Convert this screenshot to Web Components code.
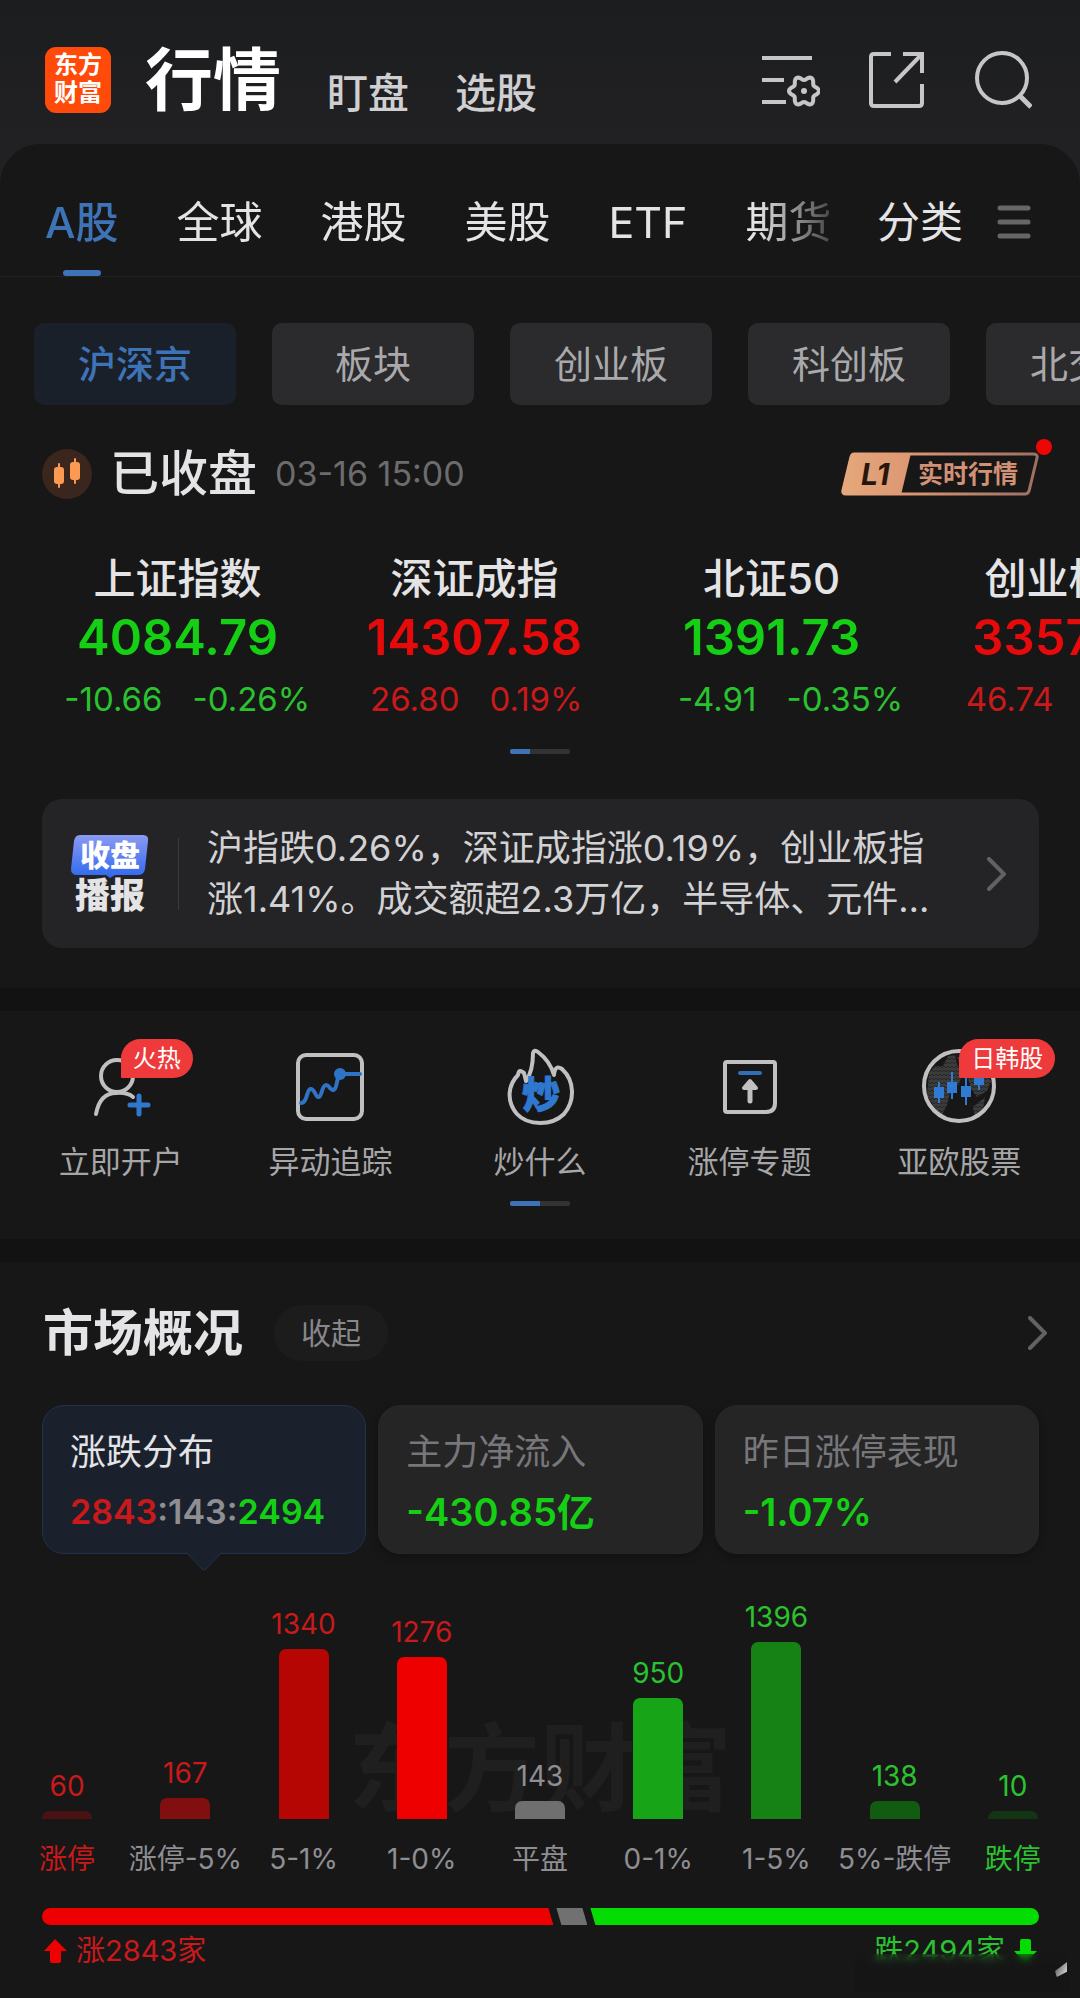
<!DOCTYPE html>
<html lang="zh-CN">
<head>
<meta charset="utf-8">
<meta name="viewport" content="width=device-width, initial-scale=1">
<title>行情</title>
<style>
	:root {
		--bg: #171717;
		--divider: #121212;
		--text: #e4e4e6;
		--muted: #8e8e93;
		--blue: #3e73b8;
		--icon: #c0c0c2;
		--up: #e60a0a;
		--up-soft: #c9191b;
		--down: #14cf14;
		--down-soft: #2bc22f;
	}
	body {
		margin: 0;
		min-height: 100vh;
		display: flex;
		flex-direction: column;
		overflow-x: hidden;
		background: linear-gradient(#1c1d1f, #212124 144px);
		color: var(--text);
		font-family: Inter, "Noto Sans CJK SC", sans-serif;
	}
	main {
		flex: 1;
		background: var(--bg);
		border-radius: 40px 40px 0 0;
	}
	section {
		border-bottom: 23px solid var(--divider);
	}
	section:last-child {
		border-bottom: 0;
	}
</style>
</head>
<body>
<em-header></em-header>
<main>
	<section>
		<em-tabs></em-tabs>
		<em-chips></em-chips>
		<em-status time="03-16 15:00">已收盘</em-status>
		<em-index-list>
			<em-index trend="down" value="4084.79" change="-10.66" percent="-0.26%">上证指数</em-index>
			<em-index trend="up" value="14307.58" change="26.80" percent="0.19%">深证成指</em-index>
			<em-index trend="down" value="1391.73" change="-4.91" percent="-0.35%">北证50</em-index>
			<em-index trend="up" value="3357.02" change="46.74" percent="1.41%">创业板指</em-index>
		</em-index-list>
		<em-pager style="--fill: 20px"></em-pager>
		<em-news>沪指跌0.26%，深证成指涨0.19%，创业板指涨1.41%。成交额超2.3万亿，半导体、元件板块涨幅居前，市场成交活跃</em-news>
	</section>
	<section>
		<em-quick-menu>
			<em-quick icon="account" badge="火热">立即开户</em-quick>
			<em-quick icon="trend">异动追踪</em-quick>
			<em-quick icon="flame">炒什么</em-quick>
			<em-quick icon="limit">涨停专题</em-quick>
			<em-quick icon="globe" badge="日韩股">亚欧股票</em-quick>
		</em-quick-menu>
		<em-pager style="--fill: 30px; padding: 17px 0 33px"></em-pager>
	</section>
	<section>
		<em-overview>
			<em-stat label="涨跌分布" active><span class="up">2843</span>:143:<span class="down">2494</span></em-stat>
			<em-stat label="主力净流入"><span class="down">-430.85亿</span></em-stat>
			<em-stat label="昨日涨停表现"><span class="down">-1.07%</span></em-stat>
		</em-overview>
		<em-chart></em-chart>
		<em-balance up="2843" flat="143" down="2494"></em-balance>
	</section>
</main>

<script>
const baseStyles = `
	*, *::before, *::after { box-sizing: border-box; }
	button { font: inherit; color: inherit; background: none; border: 0; padding: 0; margin: 0; cursor: pointer; }
	a { color: inherit; text-decoration: none; }
	svg { display: block; fill: none; }
`;

class EmElement extends HTMLElement {
	connectedCallback() {
		if (this.shadowRoot) {
			return;
		}
		this.attachShadow({ mode: "open" });
		const template = document.createElement("template");
		template.innerHTML = `<style>${baseStyles}${this.styles()}</style>${this.render()}`;
		this.shadowRoot.appendChild(template.content.cloneNode(true));
	}

	styles() {
		return "";
	}

	render() {
		return "<slot></slot>";
	}
}

// outline of the six-lobed settings wheel
function gearPath(cx, cy, r, depth) {
	const points = [];
	for (let i = 0; i < 72; i++) {
		const a = (i / 72) * Math.PI * 2;
		const d = r + depth * Math.cos(6 * a);
		points.push(`${(cx + d * Math.cos(a)).toFixed(1)} ${(cy + d * Math.sin(a)).toFixed(1)}`);
	}
	return `M${points.join("L")}Z`;
}

class EmHeader extends EmElement {
	styles() {
		return `
			:host { display: block; }
			header { display: flex; align-items: center; justify-content: space-between; height: 144px; padding: 16px 48px 0 45px; }
			.left, .right { display: flex; align-items: center; }
			.right { gap: 48px; }
			.logo { width: 66px; height: 66px; border-radius: 11px; background: #ff4a0a; color: #fff; font-size: 24px; line-height: 28px; font-weight: 700; text-align: center; padding: 4px 8px 0; margin-right: 34px; }
			nav { display: flex; align-items: flex-end; gap: 46px; line-height: 70px; font-size: 41px; font-weight: 500; color: #cfcfd1; }
			h1 { margin: 0; font-size: 68px; line-height: 96px; font-weight: 700; color: #fff; }
			.right svg { stroke: #c6c6c9; stroke-width: 4; }
		`;
	}

	render() {
		return `
		<header>
			<div class="left">
				<div class="logo">东方财富</div>
				<nav>
					<h1>行情</h1>
					<a href="#watch">盯盘</a>
					<a href="#pick">选股</a>
				</nav>
			</div>
			<div class="right">
				<button type="button" aria-label="设置">
					<svg width="58" height="58" viewBox="0 0 58 58">
						<path d="M0 7H50M0 29H22M0 51H24"/>
						<path d="${gearPath(42, 40, 13, 2)}"/>
						<circle cx="42" cy="40" r="3" fill="#c6c6c9" stroke="none"/>
					</svg>
				</button>
				<button type="button" aria-label="分享">
					<svg width="58" height="58" viewBox="0 0 58 58">
						<path d="M23 3H6Q3 3 3 6V52Q3 55 6 55H51Q54 55 54 52V33M35 3H54V22M53 4L27 31"/>
					</svg>
				</button>
				<button type="button" aria-label="搜索">
					<svg width="58" height="58" viewBox="0 0 58 58">
						<circle cx="28" cy="27" r="25"/>
						<path d="M45 44L57 56" stroke-width="5"/>
					</svg>
				</button>
			</div>
		</header>`;
	}
}

class EmTabs extends EmElement {
	styles() {
		return `
			:host { display: block; }
			nav { display: flex; align-items: center; padding: 23px 49px 0 45px; border-bottom: 1px solid #232323; font-size: 43px; line-height: 60px; }
			.strip { display: flex; flex: 1; min-width: 0; gap: 58px; overflow: hidden; -webkit-mask-image: linear-gradient(90deg, #000 90%, transparent 102%); mask-image: linear-gradient(90deg, #000 90%, transparent 102%); }
			button { position: relative; flex: none; height: 109px; white-space: nowrap; }
			.active { color: var(--blue); font-weight: 500; }
			.active::after { content: ""; position: absolute; left: 50%; bottom: 0; width: 38px; height: 6px; margin-left: -19px; border-radius: 3px; background: var(--blue); }
			.all { margin: 0 34px 0 40px; }
			svg { stroke: #666; stroke-width: 5; stroke-linecap: round; }
		`;
	}

	render() {
		const tabs = ["A股", "全球", "港股", "美股", "ETF", "期货"];
		return `
		<nav>
			<div class="strip">
				${tabs.map((t, i) => `<button type="button" class="${i ? "" : "active"}">${t}</button>`).join("")}
			</div>
			<button type="button" class="all">分类</button>
			<button type="button" aria-label="菜单">
				<svg width="34" height="36" viewBox="0 0 34 36"><path d="M3 4H31M3 18H31M3 32H31"/></svg>
			</button>
		</nav>`;
	}
}

class EmChips extends EmElement {
	styles() {
		return `
			:host { display: flex; gap: 36px; padding: 46px 0 0 34px; overflow: hidden; }
			button { flex: 0 0 202px; height: 82px; border-radius: 10px; background: #2b2b2d; color: #a9a9ac; font-size: 38px; line-height: 54px; }
			.active { background: #1a2029; color: var(--blue); font-weight: 500; }
		`;
	}

	render() {
		const chips = ["沪深京", "板块", "创业板", "科创板", "北交所"];
		return chips.map((c, i) => `<button type="button" class="${i ? "" : "active"}">${c}</button>`).join("");
	}
}

class EmStatus extends EmElement {
	styles() {
		return `
			:host { display: flex; align-items: center; height: 50px; margin-top: 44px; padding: 0 41px 0 42px; }
			h2 { margin: 0 18px; font-size: 49px; line-height: 50px; font-weight: 500; }
			time { flex: 1; font-size: 34px; line-height: 50px; color: #6c6c6e; }
			button { position: relative; }
			button::after { content: ""; position: absolute; right: -13px; top: -13px; width: 16px; height: 16px; border-radius: 50%; background: #f00505; }
			text { font-family: Inter, "Noto Sans CJK SC", sans-serif; }
		`;
	}

	render() {
		return `
		<svg width="50" height="50" viewBox="0 0 50 50">
			<circle cx="25" cy="25" r="25" fill="#3a261d"/>
			<g fill="#fb9a50">
				<rect x="12" y="18" width="10" height="17" rx="3"/><rect x="16" y="14" width="2" height="25" rx="1"/>
				<rect x="28" y="13" width="10" height="18" rx="3"/><rect x="32" y="9" width="2" height="26" rx="1"/>
			</g>
		</svg>
		<h2><slot></slot></h2>
		<time>${this.getAttribute("time")}</time>
		<button type="button" aria-label="L1 实时行情">
			<svg width="198" height="44" viewBox="0 0 198 44">
				<defs>
					<linearGradient id="gold" gradientUnits="userSpaceOnUse" x1="0" y1="0" x2="198" y2="0"><stop offset="0" stop-color="#e5a87c"/><stop offset=".35" stop-color="#dc9772"/><stop offset="1" stop-color="#9c6f63"/></linearGradient>
				</defs>
				<path d="M13 2H192Q197 2 196 6L188 39Q187 42 184 42H5Q1 42 2 38L10 5Q11 2 13 2Z" stroke="url(#gold)" stroke-width="3"/>
				<path d="M13 1H70L60 43H5Q0 43 1 38L9 5Q10 1 13 1Z" fill="url(#gold)"/>
				<text x="20" y="33" font-size="30" font-weight="700" font-style="italic" fill="#26160e">L1</text>
				<text x="77" y="31" font-size="25" font-weight="700" fill="#d29174">实时行情</text>
			</svg>
		</button>`;
	}
}

class EmIndexList extends EmElement {
	styles() {
		return `:host { display: flex; padding: 52px 0 0 29px; overflow: hidden; }`;
	}
}

class EmIndex extends EmElement {
	styles() {
		const up = this.getAttribute("trend") === "up";
		return `
			:host { display: block; flex: 0 0 297px; text-align: center; white-space: nowrap; }
			h3 { margin: 0; font-size: 42px; line-height: 56px; font-weight: 500; }
			.value { font-size: 49px; line-height: 62px; font-weight: 600; color: var(${up ? "--up" : "--down"}); }
			.diff { display: grid; grid-template-columns: 1fr 1fr; gap: 30px; margin: 0 -30px; font-size: 33px; line-height: 60px; color: var(${up ? "--up-soft" : "--down-soft"}); }
			.diff :first-child { text-align: right; }
			.diff :last-child { text-align: left; }
		`;
	}

	render() {
		return `
		<h3><slot></slot></h3>
		<div class="value">${this.getAttribute("value")}</div>
		<div class="diff"><span>${this.getAttribute("change")}</span><span>${this.getAttribute("percent")}</span></div>`;
	}
}

class EmPager extends EmElement {
	styles() {
		return `
			:host { display: flex; justify-content: center; padding: 20px 0 45px; }
			div { width: 60px; height: 5px; border-radius: 2px; background: linear-gradient(90deg, var(--blue) var(--fill), #333335 var(--fill)); }
		`;
	}

	render() {
		return "<div></div>";
	}
}

class EmNews extends EmElement {
	styles() {
		return `
			:host { display: block; padding: 0 41px 40px 42px; }
			a { display: flex; align-items: center; height: 149px; padding: 0 33px 0 29px; border-radius: 20px; background: #242426; }
			.tag { width: 78px; text-align: center; font-weight: 900; }
			.tag b { position: relative; z-index: 0; display: block; height: 42px; font-size: 30px; line-height: 40px; color: #fff; font-weight: 900; }
			.tag b svg { position: absolute; left: 0; top: 0; z-index: -1; }
			.tag span { display: block; font-size: 35px; line-height: 36px; }
			p { flex: 1; margin: 0 50px 0 28px; font-size: 36px; line-height: 51px; height: 102px; overflow: hidden; display: -webkit-box; -webkit-box-orient: vertical; -webkit-line-clamp: 2; color: #d2d2d4; }
			i { width: 1px; height: 72px; margin-left: 29px; background: #39393b; }
			a > svg { stroke: #626265; stroke-width: 4; stroke-linecap: round; }
		`;
	}

	render() {
		return `
		<a href="#news">
			<div class="tag">
				<b>
					<svg width="78" height="43" viewBox="0 0 78 43">
						<defs><linearGradient id="bubble" x2="0" y2="1"><stop offset="0" stop-color="#8a9bf2"/><stop offset="1" stop-color="#2f68ee"/></linearGradient></defs>
						<path d="M9 0H72Q78 0 77 6L74 34Q73 40 67 40H44L39 43L35 40H6Q0 40 0 34L3 6Q4 0 9 0Z" fill="url(#bubble)"/>
					</svg>
					收盘
				</b>
				<span>播报</span>
			</div>
			<i></i>
			<p><slot></slot></p>
			<svg width="19" height="34" viewBox="0 0 19 34"><path d="M2 2L17 17L2 32"/></svg>
		</a>`;
	}
}

class EmQuickMenu extends EmElement {
	styles() {
		return `:host { display: grid; grid-template-columns: repeat(5, 1fr); padding: 36px 16px 0; }`;
	}
}

const quickIcons = {
	account: `
		<circle cx="36" cy="29" r="16"/>
		<path d="M15 67Q19 46 35 46Q46 45 52 50"/>
		<path d="M58 49V67M49 58H67" stroke="#2f78cf" stroke-width="5"/>`,
	trend: `
		<rect x="8" y="8" width="64" height="64" rx="8"/>
		<path d="M11 56Q15 56 17 48Q20 37 25 46Q29 55 32 44Q35 34 40 41Q45 47 47 35L49 27H70" stroke="#2f74c4"/>
		<circle cx="50" cy="27" r="6" fill="#2f74c4" stroke="none"/>`,
	flame: `
		<path d="M33 6Q34 2 38 5Q50 14 54 28Q55 17 62 22C75 34 75 54 64 67C52 79 28 79 17 67C6 54 8 38 18 28Q19 21 24 26L26 34Q33 24 33 6Z"/>
		<text x="41" y="61" text-anchor="middle" font-size="38" font-weight="900" fill="#2f78cf" stroke="#2f78cf" stroke-width="1">炒</text>`,
	limit: `
		<path d="M17 15H63Q65 15 65 17V56Q65 65 56 65H17Q15 65 15 63V17Q15 15 17 15Z"/>
		<path d="M30 26H50" stroke="#2f6fb8"/>
		<path d="M40 36V54" stroke-width="5"/><path d="M34 41L40 34L46 41Z" fill="#c0c0c2"/>`,
	globe: `
		<defs><pattern id="lines" width="4" height="4" patternUnits="userSpaceOnUse"><path d="M1 0V3M3 1V4" stroke="#5f5f60" stroke-width="1"/></pattern></defs>
		<path d="M10 26L16 19H24L29 9L36 8L38 18L44 25L40 37L32 42L28 58L22 70L15 60L8 48ZM48 28L66 22L72 34L68 44L58 50L52 42ZM54 60L66 50L64 62L56 70ZM38 10L52 12L50 24L42 20Z" fill="url(#lines)" stroke="none"/>
		<circle cx="40" cy="39" r="35"/>
		<g fill="#2f7ad2" stroke="none">
			<path d="M15 40H25V51H15ZM19 35H21V56H19ZM28 35H38V46H28ZM32 25H34V52H32ZM42 39H52V50H42ZM46 31H48V58H46ZM55 28H65V38H55ZM59 24H61V43H59Z"/>
		</g>`,
};

class EmQuick extends EmElement {
	styles() {
		return `
			:host { display: block; }
			a { display: flex; flex-direction: column; align-items: center; gap: 13px; font-size: 31px; line-height: 44px; color: #a6a6a8; }
			.icon { position: relative; width: 80px; height: 80px; }
			svg { stroke: var(--icon); stroke-width: 4; stroke-linecap: round; stroke-linejoin: round; }
			text { font-family: "Noto Sans CJK SC", sans-serif; }
			.badge { position: absolute; left: 40px; top: -8px; height: 39px; padding: 0 12px; border-radius: 20px 20px 20px 1px; background: #ef3a3c; color: #fff; font-size: 24px; line-height: 39px; white-space: nowrap; }
		`;
	}

	render() {
		const badge = this.getAttribute("badge");
		return `
		<a href="#quick">
			<div class="icon">
				<svg width="80" height="80" viewBox="0 0 80 80">${quickIcons[this.getAttribute("icon")]}</svg>
				${badge ? `<span class="badge">${badge}</span>` : ""}
			</div>
			<span><slot></slot></span>
		</a>`;
	}
}

class EmOverview extends EmElement {
	styles() {
		return `
			:host { display: block; padding: 43px 41px 0 42px; }
			header { display: flex; align-items: center; height: 56px; }
			h2 { margin: 0 31px 0 1px; font-size: 50px; line-height: 56px; font-weight: 700; }
			.fold { height: 56px; padding: 0 27px; border-radius: 28px; background: #1c1c1d; color: #88888b; font-size: 30px; line-height: 56px; }
			.more { margin: 0 -8px 0 auto; }
			.more svg { stroke: #626265; stroke-width: 4; stroke-linecap: round; }
			.cards { display: grid; grid-template-columns: repeat(3, 1fr); gap: 12px; margin-top: 44px; }
		`;
	}

	render() {
		return `
		<header>
			<h2>市场概况</h2>
			<button type="button" class="fold">收起</button>
			<button type="button" class="more" aria-label="更多">
				<svg width="19" height="34" viewBox="0 0 19 34"><path d="M2 2L17 17L2 32"/></svg>
			</button>
		</header>
		<div class="cards"><slot></slot></div>`;
	}
}

class EmStat extends EmElement {
	styles() {
		return `
			:host { display: block; }
			button { position: relative; display: block; width: 100%; height: 149px; padding: 8px 27px 0; border: 1px solid #272727; border-radius: 22px; background: #252525; text-align: left; white-space: nowrap; box-shadow: 0 3px 10px rgba(0, 0, 0, 0.3); }
			span { display: block; }
			.label { font-size: 36px; line-height: 52px; color: #77777b; }
			.value { margin-top: 4px; font-size: 38px; line-height: 60px; font-weight: 600; color: var(--muted); }
			::slotted(.up) { color: var(--up-soft); }
			::slotted(.down) { color: var(--down); }
			:host([active]) button { background: #1a212d; border-color: #21324a; box-shadow: none; }
			:host([active]) .label { color: var(--text); }
			:host([active]) .value { font-size: 34px; }
			svg { position: absolute; left: 50%; top: 146px; margin-left: -18px; stroke: #21324a; fill: #1a212d; }
		`;
	}

	render() {
		return `
		<button type="button">
			<span class="label">${this.getAttribute("label")}</span>
			<span class="value"><slot></slot></span>
			${this.hasAttribute("active") ? `<svg width="36" height="20" viewBox="0 0 36 20"><path d="M1 1L16 17Q18 19 20 17L35 1"/></svg>` : ""}
		</button>`;
	}
}

const distribution = [
	{ label: "涨停", count: 60, height: 8, fill: "#4a1213", side: "up", edge: true },
	{ label: "涨停-5%", count: 167, height: 21, fill: "#810f10", side: "up" },
	{ label: "5-1%", count: 1340, height: 170, fill: "#b50603", side: "up" },
	{ label: "1-0%", count: 1276, height: 162, fill: "#ee0000", side: "up" },
	{ label: "平盘", count: 143, height: 18, fill: "#6f6f70", side: "flat" },
	{ label: "0-1%", count: 950, height: 121, fill: "#17a517", side: "down" },
	{ label: "1-5%", count: 1396, height: 177, fill: "#168114", side: "down" },
	{ label: "5%-跌停", count: 138, height: 18, fill: "#125c12", side: "down" },
	{ label: "跌停", count: 10, height: 8, fill: "#143514", side: "down", edge: true },
];

class EmChart extends EmElement {
	styles() {
		return `
			:host { display: block; position: relative; padding: 0 8px; }
			.mark { position: absolute; left: 0; right: 0; top: 144px; text-align: center; font-size: 96px; line-height: 140px; font-weight: 700; color: #1f1f1f; }
			ol { position: relative; display: grid; grid-template-columns: repeat(9, 1fr); margin: 0; padding: 0; list-style: none; }
			li { display: flex; flex-direction: column; align-items: center; justify-content: flex-end; height: 325px; font-size: 28px; line-height: 40px; color: var(--muted); white-space: nowrap; }
			.bar { width: 50px; margin: 5px 0 20px; border-radius: 7px 7px 0 0; }
			.up b, .up.edge { color: var(--up-soft); }
			.down b, .down.edge { color: var(--down-soft); }
			b { font-weight: 400; }
		`;
	}

	render() {
		return `
		<div class="mark" aria-hidden="true">东方财富</div>
		<ol>
			${distribution.map((d) => `
			<li class="${d.side} ${d.edge ? "edge" : ""}">
				<b>${d.count}</b>
				<div class="bar" style="height: ${d.height}px; background: ${d.fill}"></div>
				<span>${d.label}</span>
			</li>`).join("")}
		</ol>`;
	}
}

class EmBalance extends EmElement {
	styles() {
		return `
			:host { display: block; padding: 29px 41px 32px 42px; }
			.track { display: flex; gap: 3px; height: 17px; }
			.track div { clip-path: polygon(0 0, calc(100% - 5px) 0, 100% 100%, 5px 100%); }
			.track .rise { flex: ${this.getAttribute("up")}; background: #ee0000; border-radius: 9px 0 0 9px; clip-path: polygon(0 0, calc(100% - 5px) 0, 100% 100%, 0 100%); }
			.track .flat { width: 31px; background: #717172; }
			.track .fall { flex: ${this.getAttribute("down")}; background: #04dc04; border-radius: 0 9px 9px 0; clip-path: polygon(0 0, 100% 0, 100% 100%, 5px 100%); }
			.legend { position: relative; display: flex; justify-content: space-between; margin-top: 11px; padding: 0 2px; font-size: 29px; line-height: 30px; }
			.legend span { display: flex; align-items: center; gap: 9px; }
			.up { color: var(--up-soft); }
			.down { color: var(--down-soft); }
			.haze { position: absolute; right: -30px; top: 18px; width: 214px; height: 38px; background: linear-gradient(rgba(23, 23, 23, 0.4), #151515 45%); backdrop-filter: blur(4px); }
			.haze::after { content: ""; position: absolute; right: 2px; top: 8px; width: 12px; height: 15px; background: linear-gradient(120deg, #444, #e8e8e8); clip-path: polygon(100% 0, 100% 65%, 15% 100%, 0 60%); }
		`;
	}

	render() {
		return `
		<div class="track"><div class="rise"></div><div class="flat"></div><div class="fall"></div></div>
		<div class="legend">
			<span class="up"><svg width="23" height="24" viewBox="0 0 23 24"><path d="M11 0L23 12H17V22Q17 24 15 24H8Q6 24 6 22V12H0Z" fill="#f00000"/></svg>涨${this.getAttribute("up")}家</span>
			<span class="down">跌${this.getAttribute("down")}家<svg width="23" height="24" viewBox="0 0 23 24"><path d="M11 24L23 12H17V2Q17 0 15 0H8Q6 0 6 2V12H0Z" fill="#04dc04"/></svg></span>
			<div class="haze"></div>
		</div>`;
	}
}

customElements.define("em-header", EmHeader);
customElements.define("em-tabs", EmTabs);
customElements.define("em-chips", EmChips);
customElements.define("em-status", EmStatus);
customElements.define("em-index-list", EmIndexList);
customElements.define("em-index", EmIndex);
customElements.define("em-pager", EmPager);
customElements.define("em-news", EmNews);
customElements.define("em-quick-menu", EmQuickMenu);
customElements.define("em-quick", EmQuick);
customElements.define("em-overview", EmOverview);
customElements.define("em-stat", EmStat);
customElements.define("em-chart", EmChart);
customElements.define("em-balance", EmBalance);
</script>
</body>
</html>
